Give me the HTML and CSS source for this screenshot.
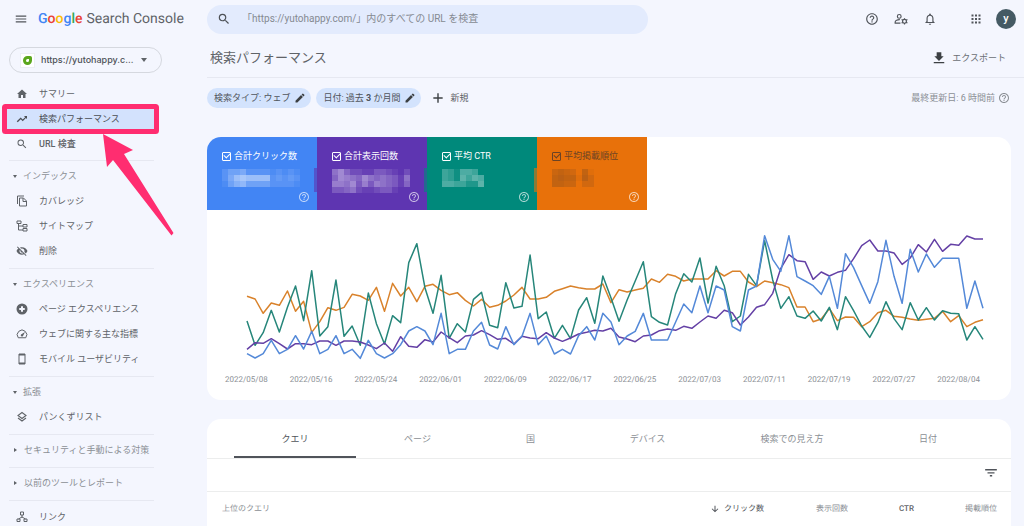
FILE: index.html
```html
<!DOCTYPE html>
<html lang="ja">
<head>
<meta charset="utf-8">
<meta name="viewport" content="width=device-width, initial-scale=1">
<title>Google Search Console</title>
<link rel="stylesheet" href="styles.css">
</head>
<body>
<svg class="sprite" aria-hidden="true">
  <symbol id="menu" viewBox="0 0 24 24"><path d="M3 18h18v-2H3zm0-5h18v-2H3zm0-7v2h18V6z"/></symbol>
  <symbol id="search" viewBox="0 0 24 24"><path d="M15.5 14h-.79l-.28-.27A6.471 6.471 0 0 0 16 9.5 6.5 6.5 0 1 0 9.5 16c1.61 0 3.09-.59 4.23-1.57l.27.28v.79l5 4.99L20.49 19l-4.99-5zm-6 0C7.01 14 5 11.99 5 9.5S7.01 5 9.5 5 14 7.01 14 9.5 11.99 14 9.5 14z"/></symbol>
  <symbol id="help" viewBox="0 0 24 24"><path d="M11 18h2v-2h-2v2zm1-16C6.48 2 2 6.48 2 12s4.48 10 10 10 10-4.48 10-10S17.52 2 12 2zm0 18c-4.41 0-8-3.59-8-8s3.59-8 8-8 8 3.59 8 8-3.59 8-8 8zm0-14c-2.21 0-4 1.79-4 4h2c0-1.1.9-2 2-2s2 .9 2 2c0 2-3 1.75-3 5h2c0-2.25 3-2.5 3-5 0-2.21-1.79-4-4-4z"/></symbol>
  <symbol id="users" viewBox="0 0 24 24"><g fill="none" stroke="currentColor" stroke-width="2"><circle cx="9" cy="7.500" r="3.200"/><path d="M11 19H2v-2c0-2.500 4-4 8-3.800"/><circle cx="18" cy="16" r="3.300"/></g><path d="M17 10.500h2v2.500h-2zm0 8.500h2v2.500h-2zM12.500 13.800l1-1.700 2.200 1.200-1 1.700zm7.800 4.500l1-1.700 2.200 1.200-1 1.700zm-7.800-.1l2.200-1.200 1 1.700-2.200 1.200zm7.800-4.900l2.200-1.200 1 1.700-2.200 1.200z"/></symbol>
  <symbol id="bell" viewBox="0 0 24 24"><path d="M12 22c1.100 0 2-.9 2-2h-4c0 1.100.9 2 2 2zm6-6v-5c0-3.070-1.630-5.640-4.500-6.320V4c0-.83-.67-1.500-1.500-1.500s-1.500.67-1.500 1.500v.68C7.640 5.360 6 7.920 6 11v5l-2 2v1h16v-1l-2-2zm-2 1H8v-6c0-2.480 1.510-4.500 4-4.500s4 2.020 4 4.500v6z"/></symbol>
  <symbol id="apps" viewBox="0 0 24 24"><path d="M3 3h4v4H3zm7 0h4v4h-4zm7 0h4v4h-4zM3 10h4v4H3zm7 0h4v4h-4zm7 0h4v4h-4zM3 17h4v4H3zm7 0h4v4h-4zm7 0h4v4h-4z"/></symbol>
  <symbol id="home" viewBox="0 0 24 24"><path d="M10 20v-6h4v6h5v-8h3L12 3 2 12h3v8z"/></symbol>
  <symbol id="trend" viewBox="0 0 24 24"><path d="M16 6l2.290 2.290-4.880 4.880-4-4L1.500 16.500 3.500 18.500l6-6 4 4 6.300-6.290L22 12V6z"/></symbol>
  <symbol id="copy" viewBox="0 0 24 24"><g fill="none" stroke="currentColor" stroke-width="2"><path d="M3 18V2h13M7 6h8l6 6v10H7z"/><path d="M14 6v7h7"/></g></symbol>
  <symbol id="sitemap" viewBox="0 0 24 24"><g fill="none" stroke="currentColor" stroke-width="2"><path d="M2 2h8v5H2zM14 9h8v5h-8zM14 17h8v5h-8zM5 7v13h9M5 12h9"/></g></symbol>
  <symbol id="hidden" viewBox="0 0 24 24"><path d="M12 7c2.760 0 5 2.240 5 5 0 .65-.13 1.260-.36 1.830l2.920 2.920c1.510-1.260 2.700-2.890 3.430-4.750-1.730-4.390-6-7.500-11-7.500-1.400 0-2.740.25-3.980.7l2.160 2.160C10.740 7.130 11.350 7 12 7zM2 4.270l2.280 2.280.46.46C3.080 8.300 1.780 10.020 1 12c1.730 4.390 6 7.500 11 7.500 1.550 0 3.030-.3 4.380-.84l.42.42L19.730 22 21 20.730 3.270 3 2 4.270zM7.530 9.800l1.550 1.550c-.05.21-.08.43-.08.65 0 1.660 1.340 3 3 3 .22 0 .44-.03.65-.08l1.550 1.550c-.67.33-1.410.53-2.200.53-2.760 0-5-2.240-5-5 0-.79.2-1.530.53-2.200z"/></symbol>
  <symbol id="plusdisc" viewBox="0 0 24 24"><path fill-rule="evenodd" d="M12 1a11 11 0 1 0 0 22 11 11 0 0 0 0-22zM10 6.500h4V10h3.500v4H14v3.500h-4V14H6.500v-4H10z"/></symbol>
  <symbol id="speed" viewBox="0 0 24 24"><path d="M4.500 19.500a9.500 9.500 0 1 1 15 0z" fill="none" stroke="currentColor" stroke-width="2"/><path d="M18 8l-4 8a2.300 2.300 0 0 1-4-3z"/></symbol>
  <symbol id="phone" viewBox="0 0 24 24"><path d="M6 2h12v20H6z" fill="none" stroke="currentColor" stroke-width="2"/><path d="M6 2h12v3H6zm0 17h12v3H6z"/></symbol>
  <symbol id="layers" viewBox="0 0 24 24"><path d="M12 3l8 6-8 6-8-6zM4 14l8 6 8-6" fill="none" stroke="currentColor" stroke-width="2.200"/></symbol>
  <symbol id="links" viewBox="0 0 24 24"><g fill="none" stroke="currentColor" stroke-width="2"><path d="M9 2h6v6H9zM2 16h6v5H2zM16 16h6v5h-6zM12 8v5M5 16l7-4 7 4"/></g></symbol>
  <symbol id="pencil" viewBox="0 0 24 24"><path d="M3 17.250V21h3.750L17.810 9.940l-3.750-3.750L3 17.250zM20.710 7.040a1 1 0 0 0 0-1.410l-2.340-2.340a1 1 0 0 0-1.410 0l-1.830 1.830 3.750 3.750 1.830-1.830z"/></symbol>
  <symbol id="plus" viewBox="0 0 24 24"><path d="M20 13.200h-6.800V20h-2.400v-6.800H4v-2.400h6.800V4h2.400v6.800H20z"/></symbol>
  <symbol id="download" viewBox="0 0 24 24"><path d="M20 9h-4V2H8v7H4l8 8zM3 19v2h18v-2z"/></symbol>
  <symbol id="filter" viewBox="0 0 24 24"><path d="M10 18h4v-2.500h-4zM2 5v2.500h20V5zm4 8h12v-2.500H6z"/></symbol>
  <symbol id="down" viewBox="0 0 24 24"><path d="M20 12l-1.500-1.500-5.300 5.300V4h-2.400v11.800l-5.300-5.300L4 12l8 8z"/></symbol>
</svg>

<div class="app">
  <aside class="side">
    <div class="brand">
      <button class="icon-btn" aria-label="メニュー"><svg class="i14"><use href="#menu"/></svg></button>
      <a class="logo" href="#"><span class="google"><span class="b">G</span><span class="r">o</span><span class="y">o</span><span class="b">g</span><span class="g">l</span><span class="r">e</span></span> <span class="product">Search Console</span></a>
    </div>
    <label class="property">
      <span class="favicon"></span>
      <select aria-label="プロパティ"><option>https://yutohappy.c...</option></select>
    </label>
    <nav class="nav">
      <div class="group first">
        <a class="item" href="#"><svg class="i12"><use href="#home"/></svg>サマリー</a>
        <a class="item current" href="#"><svg class="i12"><use href="#trend"/></svg>検索パフォーマンス</a>
        <a class="item strong" href="#"><svg class="i12"><use href="#search"/></svg>URL 検査</a>
      </div>
      <div class="group">
        <button class="heading open">インデックス</button>
        <a class="item" href="#"><svg class="i12"><use href="#copy"/></svg>カバレッジ</a>
        <a class="item" href="#"><svg class="i12"><use href="#sitemap"/></svg>サイトマップ</a>
        <a class="item" href="#"><svg class="i12"><use href="#hidden"/></svg>削除</a>
      </div>
      <div class="group">
        <button class="heading open">エクスペリエンス</button>
        <a class="item" href="#"><svg class="i12"><use href="#plusdisc"/></svg>ページ エクスペリエンス</a>
        <a class="item" href="#"><svg class="i12"><use href="#speed"/></svg>ウェブに関する主な指標</a>
        <a class="item" href="#"><svg class="i12"><use href="#phone"/></svg>モバイル ユーザビリティ</a>
      </div>
      <div class="group">
        <button class="heading open">拡張</button>
        <a class="item" href="#"><svg class="i12"><use href="#layers"/></svg>パンくずリスト</a>
      </div>
      <div class="group"><button class="heading">セキュリティと手動による対策</button></div>
      <div class="group"><button class="heading">以前のツールとレポート</button></div>
      <div class="group"><a class="item" href="#"><svg class="i12"><use href="#links"/></svg>リンク</a></div>
    </nav>
    <svg class="callout" viewBox="0 0 180 240" aria-hidden="true">
      <rect x="4.500" y="106.500" width="152" height="25" rx="1" class="callout-box"/>
      <path d="M103 134L133 150 124 154 173.500 233 171.500 235.500 113 160 107 167z" class="callout-arrow"/>
    </svg>
  </aside>

  <div class="page">
    <header class="top">
      <form class="searchbar">
        <svg class="i14"><use href="#search"/></svg>
        <input type="text" aria-label="URL を検査" placeholder="「https://yutohappy.com/」内のすべての URL を検査">
      </form>
      <div class="tools">
        <button class="icon-btn" aria-label="ヘルプ"><svg class="i14"><use href="#help"/></svg></button>
        <button class="icon-btn" aria-label="ユーザー"><svg class="i14"><use href="#users"/></svg></button>
        <button class="icon-btn" aria-label="通知"><svg class="i14"><use href="#bell"/></svg></button>
        <button class="icon-btn apps" aria-label="アプリ"><svg class="i12"><use href="#apps"/></svg></button>
        <button class="avatar">y</button>
      </div>
    </header>
    <div class="titlebar">
      <h1>検索パフォーマンス</h1>
      <button class="export"><svg class="i14"><use href="#download"/></svg>エクスポート</button>
    </div>
    <main>
      <div class="filters">
        <button class="chip"><span>検索タイプ: ウェブ</span><svg class="i12"><use href="#pencil"/></svg></button>
        <button class="chip"><span>日付: 過去 <b>3</b> か月間</span><svg class="i12"><use href="#pencil"/></svg></button>
        <button class="new"><svg class="i14"><use href="#plus"/></svg>新規</button>
        <span class="updated">最終更新日: 6 時間前<svg class="i12"><use href="#help"/></svg></span>
      </div>

      <section class="card">
        <div class="metrics">
          <div class="metric clicks"><label><input type="checkbox" checked>合計クリック数</label><svg class="mosaic" data-cells="2445222212121 2589888823232 1467444422221"></svg><svg class="i12 info"><use href="#help"/></svg></div>
          <div class="metric views"><label><input type="checkbox" checked>合計表示回数</label><svg class="mosaic" data-cells="5742211332102 4765475454315 6657363654314 3345211233100"></svg><svg class="i12 info"><use href="#help"/></svg></div>
          <div class="metric ctr"><label><input type="checkbox" checked>平均 CTR</label><svg class="mosaic" data-cells="4315540 4316465 5544226"></svg><svg class="i12 info"><use href="#help"/></svg></div>
          <div class="metric rank"><label><input type="checkbox" checked>平均掲載順位</label><svg class="mosaic" data-cells="4543051 5655163 5544033"></svg><svg class="i12 info"><use href="#help"/></svg></div>
        </div>
        <svg class="plot" viewBox="0 0 91 420" preserveAspectRatio="none" role="img" aria-label="検索パフォーマンスの推移"></svg>
        <div class="dates"><span>2022/05/08</span><span>2022/05/16</span><span>2022/05/24</span><span>2022/06/01</span><span>2022/06/09</span><span>2022/06/17</span><span>2022/06/25</span><span>2022/07/03</span><span>2022/07/11</span><span>2022/07/19</span><span>2022/07/27</span><span>2022/08/04</span></div>
      </section>

      <section class="card report">
        <div class="tabs" role="tablist">
          <button role="tab" aria-selected="true">クエリ</button>
          <button role="tab">ページ</button>
          <button role="tab">国</button>
          <button role="tab">デバイス</button>
          <button role="tab">検索での見え方</button>
          <button role="tab">日付</button>
        </div>
        <div class="table-tools"><button class="icon-btn" aria-label="フィルタ"><svg class="i14"><use href="#filter"/></svg></button></div>
        <table>
          <thead><tr>
            <th class="query">上位のクエリ</th>
            <th class="sorted"><svg class="i10"><use href="#down"/></svg>クリック数</th>
            <th class="c-views">表示回数</th>
            <th class="c-ctr">CTR</th>
            <th class="c-rank">掲載順位</th>
          </tr></thead>
        </table>
      </section>
    </main>
  </div>
</div>
<script src="chart.js"></script>
</body>
</html>
```
FILE: styles.css
```css
* { box-sizing: border-box; }
*::before, *::after { box-sizing: border-box; }
body {
  margin: 0;
  background: #f4f6fe;
  color: #5f6368;
  font: 9px/12px Roboto, "Noto Sans CJK JP", sans-serif;
}
button, input, select { font: inherit; color: inherit; border: 0; background: none; padding: 0; margin: 0; outline: 0; }
a { color: inherit; text-decoration: none; }
svg { fill: currentColor; flex: none; display: block; }
.sprite { position: absolute; width: 0; height: 0; }
.i10 { width: 10px; height: 10px; }
.i12 { width: 12px; height: 12px; }
.i14 { width: 14px; height: 14px; }

.app { display: flex; height: 100vh; overflow: hidden; }

/* Side navigation */
.side { position: relative; flex: 0 0 207px; }
.brand { display: flex; align-items: center; height: 38px; padding-left: 14px; gap: 10px; }
.icon-btn { display: flex; color: #50545a; }
.logo { display: flex; align-items: center; gap: 4px; font-size: 14px; line-height: 20px; color: #5f6368; white-space: nowrap; text-rendering: geometricPrecision; }
.google { font-weight: 500; }
.google .b { color: #4285f4; }
.google .r { color: #ea4335; }
.google .y { color: #fbbc05; }
.google .g { color: #34a853; }
.property {
  display: flex; align-items: center; gap: 6px;
  width: 153px; height: 26px; margin: 9px 0 8px 9px; padding: 0 14px 0 10px;
  border: 1px solid #d5d8df; border-radius: 13px;
}
.property::after { content: ""; border: 3px solid transparent; border-top: 4px solid #5f6368; border-bottom: 0; }
.favicon { width: 15px; height: 15px; display: grid; place-items: center; background: #fff; border: 1px solid #eceef4; }
.favicon::before { content: ""; width: 9px; height: 9px; border: 3px solid #5aa61c; border-radius: 50% 20% 50% 50%; background: #fff; }
.property select { appearance: none; flex: 1; min-width: 0; font-family: Inter, sans-serif; font-size: 9px; font-weight: 500; color: #4d5156; }

.group { border-top: 1px solid #e6e8f1; margin: 0 53px 0 9px; padding: 3px 0 5px; }
.group.first { border: 0; padding: 0 0 4px; }
.item { display: flex; align-items: center; gap: 11px; height: 25px; padding-left: 7px; white-space: nowrap; color: #5f6368; }
.current { background: #d3e2fd; color: #4a4e54; margin-left: -3px; margin-right: -1px; padding-left: 10px; }
.strong { font-weight: 500; }
.heading { display: flex; align-items: center; height: 24px; padding-left: 4px; gap: 6px; color: #8b8f95; white-space: nowrap; }
.heading::before { content: ""; margin: 0 1px; border: 2px solid transparent; border-left: 3px solid #5f6368; border-right: 0; }
.heading.open::before { margin: 0; border: 2px solid transparent; border-top: 3px solid #5f6368; border-bottom: 0; }

/* Highlight drawn over the navigation */
.callout { position: absolute; left: 0; top: 0; width: 180px; height: 240px; pointer-events: none; }
.callout-box { fill: none; stroke: #ff2d70; stroke-width: 5; }
.callout-arrow { fill: #ff2d70; }

/* Header */
.page { flex: 1; min-width: 0; display: flex; flex-direction: column; }
.top { display: flex; align-items: center; justify-content: space-between; height: 38px; padding-right: 8px; }
.searchbar { display: flex; align-items: center; gap: 11px; flex: 0 1 441px; height: 29px; padding: 0 10px; border-radius: 15px; background: #e3ebfd; color: #4d5156; }
.searchbar input { flex: 1; font-size: 10px; }
.searchbar input::placeholder { color: #858a92; opacity: 1; }
.tools { display: flex; align-items: center; gap: 15px; }
.apps { margin-left: 18px; }
.avatar { width: 20px; height: 20px; border-radius: 50%; background: #455a64; color: #fff; font-size: 11px; font-weight: 500; }
.tools .avatar { margin-left: -1px; }
.titlebar { display: flex; align-items: center; justify-content: space-between; height: 40px; padding: 0 18px 0 3px; border-bottom: 1px solid #e6e8f1; }
h1 { margin: 0; font-size: 13px; line-height: 20px; font-weight: 400; color: #5f6368; }
.export { display: flex; align-items: center; gap: 6px; color: #6b6f75; }
.export svg { color: #3c4043; }

main { flex: 1; min-height: 0; display: flex; flex-direction: column; padding: 10px 13px 0 0; }
.filters { display: flex; align-items: center; gap: 5px; margin-bottom: 29px; }
.chip { display: flex; align-items: center; justify-content: space-between; gap: 4px; height: 20px; padding: 0 5px 0 7px; border-radius: 10px; background: #d3e3fd; color: #50555c; white-space: nowrap; }
.chip b { font-weight: 700; }
.chip svg { color: #3c4043; }
.new { display: flex; align-items: center; gap: 5px; margin-left: 5px; }
.new svg { color: #3c4043; }
.updated { display: flex; align-items: center; gap: 3px; margin-left: auto; padding-right: 1px; color: #8b8f95; }

/* Chart card */
.card { background: #fff; border-radius: 14px; overflow: hidden; flex: none; }
.metrics { display: flex; }
.metric { position: relative; flex: 0 1 110px; height: 73px; padding: 13px 0 0 15px; color: #fff; }
.metric label { display: flex; align-items: center; gap: 3px; white-space: nowrap; }
.metric input { appearance: none; display: grid; place-items: center; width: 9px; height: 9px; border: 1px solid currentColor; border-radius: 1px; }
.metric input:checked::before { content: ""; width: 6px; height: 4px; border: solid currentColor; border-width: 0 0 1px 1px; rotate: -45deg; translate: 0 -1px; }
.metric + .metric::before { content: ""; position: absolute; left: -3px; top: 31px; width: 5px; height: 24px; background: inherit; opacity: 0.6; }
.mosaic { height: 24px; width: 78px; margin-top: 7px; }
.info { position: absolute; right: 7px; bottom: 7px; opacity: 0.65; }
.clicks { background: #4285f4; }
.views { background: #5e35b1; }
.ctr { background: #00897b; }
.rank { background: #e8710a; }
.rank label, .rank .mosaic { color: #6b4326; }
.plot { width: calc(100% - 68px); height: 140px; margin: 10px 28px 0 40px; overflow: visible; }
.plot polyline { fill: none; stroke-width: 1.5; stroke-linejoin: round; vector-effect: non-scaling-stroke; }
.line-rank { stroke: #d9822b; }
.line-ctr { stroke: #26867a; }
.line-views { stroke: #6440a5; }
.line-clicks { stroke: #5489d8; }
.dates { display: grid; grid-template-columns: repeat(12, 1fr); margin: 14px 20px 14px 7px; text-align: center; font-size: 8px; color: #8b8f95; text-rendering: geometricPrecision; }

/* Report card */
.report { flex: 1; margin-top: 19px; border-radius: 14px 14px 0 0; }
.tabs { display: grid; grid-template-columns: 122fr 123fr 103fr 131fr 158fr 114fr; height: 40px; padding: 0 26px 0 27px; border-bottom: 1px solid #eceded; }
.tabs button { color: #8b8f95; border-bottom: 2px solid transparent; border-top: 2px solid transparent; }
.tabs [aria-selected] { color: #50545a; border-bottom-color: #50545a; }
.table-tools { display: flex; align-items: center; justify-content: flex-end; height: 33px; padding: 0 13px 4px 0; border-bottom: 1px solid #eceded; }
table { width: 100%; border-collapse: collapse; table-layout: fixed; text-rendering: geometricPrecision; }
th { height: 34px; padding: 0; font-size: 8px; font-weight: 400; text-align: right; color: #8b8f95; }
th.query { text-align: left; padding-left: 15px; }
th svg { display: inline-block; vertical-align: middle; margin-right: 4px; }
th.sorted { width: 80px; color: #50545a; }
th.c-views { width: 84px; }
th.c-ctr { width: 66px; color: #5f6368; font-weight: 500; }
th.c-rank { width: 97px; padding-right: 14px; }
```
FILE: chart.js
```js
// Daily values, one per day from 2022/05/08, as distances from the top of the plot.
const series = {
  rank: [229,237,280,249,256,213,274,244,337,305,263,271,262,223,228,241,202,274,190,228,202,245,199,193,211,224,218,241,258,238,262,256,243,225,202,237,237,232,214,206,198,203,207,207,192,248,209,216,210,205,177,187,163,169,183,177,177,177,152,168,154,154,186,200,183,188,194,203,261,261,305,297,266,302,291,292,320,305,278,271,289,292,297,301,298,295,274,305,287,320,307,299],
  ctr: [303,376,338,271,336,262,198,302,152,348,320,180,349,318,376,219,311,372,287,308,128,71,203,280,166,355,311,336,238,217,316,323,188,264,259,105,296,276,355,316,356,270,233,310,168,233,304,240,183,125,290,307,315,221,161,186,114,249,139,197,305,288,163,197,62,180,265,230,288,295,273,303,262,329,230,272,318,352,308,245,296,329,248,300,263,300,272,280,281,360,320,358],
  views: [388,368,370,356,371,387,371,371,374,363,363,376,363,363,366,375,386,369,394,350,379,382,359,366,336,353,368,348,345,332,344,358,355,372,349,354,356,338,354,364,354,342,337,331,333,325,351,357,365,348,345,332,327,331,319,325,306,288,295,271,278,315,291,262,254,220,145,104,122,125,178,156,168,157,151,116,77,60,93,93,99,133,114,74,96,58,94,73,76,48,57,57],
  clicks: [401,414,401,361,401,388,347,387,334,401,388,347,401,388,415,361,401,414,401,374,333,320,333,374,280,401,388,388,333,307,375,387,320,374,349,280,374,348,402,388,402,347,320,360,280,306,374,348,334,280,360,360,360,306,252,278,198,278,198,210,320,333,210,198,47,118,154,47,170,183,197,223,169,265,101,143,197,250,185,61,169,250,88,156,102,142,115,115,115,265,183,265]
};

const NS = "http://www.w3.org/2000/svg";
const plot = document.querySelector(".plot");
for (const [name, values] of Object.entries(series)) {
  const line = document.createElementNS(NS, "polyline");
  line.setAttribute("class", "line-" + name);
  line.setAttribute("points", values.map((v, i) => i + "," + v).join(" "));
  plot.append(line);
}

// Obscured totals: each digit is the strength of one block.
const CELL = 6;
for (const mosaic of document.querySelectorAll(".mosaic")) {
  mosaic.dataset.cells.split(" ").forEach((row, y) => {
    [...row].forEach((strength, x) => {
      const block = document.createElementNS(NS, "rect");
      block.setAttribute("x", x * CELL);
      block.setAttribute("y", y * CELL);
      block.setAttribute("width", CELL);
      block.setAttribute("height", CELL);
      block.setAttribute("fill-opacity", strength * 0.06);
      mosaic.append(block);
    });
  });
}
```
